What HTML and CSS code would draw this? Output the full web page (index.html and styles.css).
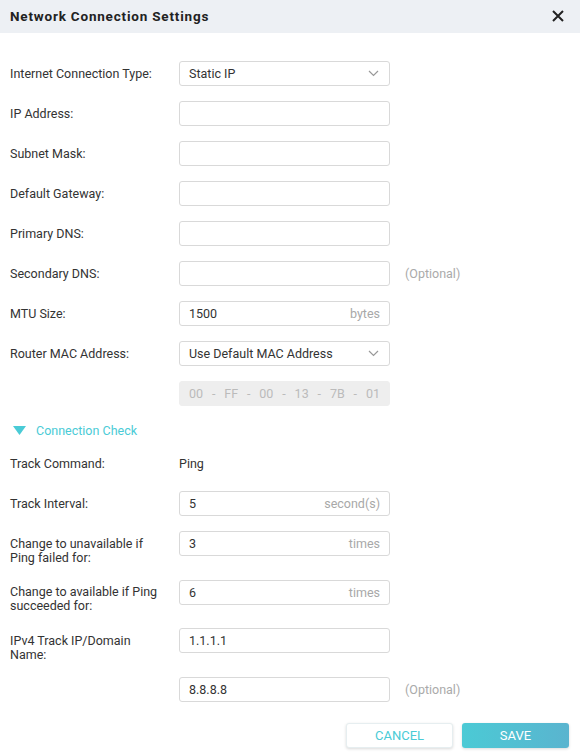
FILE: index.html
```html
<!DOCTYPE html>
<html>
<head>
<meta charset="utf-8">
<link rel="stylesheet" href="styles.css">
</head>
<body>
<div class="dialog">
  <div class="header">
    <span class="title">Network Connection Settings</span>
    <svg class="close" width="14" height="14" viewBox="0 0 14 14"><path d="M2 2 L12 12 M12 2 L2 12" stroke="#222" stroke-width="2" fill="none"/></svg>
  </div>
  <div class="body">
    <div class="row">
      <div class="label">Internet Connection Type:</div>
      <div class="field select"><span>Static IP</span><svg class="chev" width="11" height="7" viewBox="0 0 11 7"><path d="M1 1 L5.5 5.5 L10 1" stroke="#999" stroke-width="1.2" fill="none"/></svg></div>
    </div>
    <div class="row">
      <div class="label">IP Address:</div>
      <div class="field"></div>
    </div>
    <div class="row">
      <div class="label">Subnet Mask:</div>
      <div class="field"></div>
    </div>
    <div class="row">
      <div class="label">Default Gateway:</div>
      <div class="field"></div>
    </div>
    <div class="row">
      <div class="label">Primary DNS:</div>
      <div class="field"></div>
    </div>
    <div class="row">
      <div class="label">Secondary DNS:</div>
      <div class="field"></div>
      <div class="hint">(Optional)</div>
    </div>
    <div class="row">
      <div class="label">MTU Size:</div>
      <div class="field"><span>1500</span><span class="unit">bytes</span></div>
    </div>
    <div class="row">
      <div class="label">Router MAC Address:</div>
      <div class="field select"><span>Use Default MAC Address</span><svg class="chev" width="11" height="7" viewBox="0 0 11 7"><path d="M1 1 L5.5 5.5 L10 1" stroke="#999" stroke-width="1.2" fill="none"/></svg></div>
    </div>
    <div class="row">
      <div class="label"></div>
      <div class="field mac"><span>00</span><span>-</span><span>FF</span><span>-</span><span>00</span><span>-</span><span>13</span><span>-</span><span>7B</span><span>-</span><span>01</span></div>
    </div>
    <div class="section">
      <svg width="13" height="9" viewBox="0 0 13 9"><path d="M0 0 L13 0 L6.5 9 Z" fill="#4acbd6"/></svg>
      <span>Connection Check</span>
    </div>
    <div class="row">
      <div class="label">Track Command:</div>
      <div class="value">Ping</div>
    </div>
    <div class="row">
      <div class="label">Track Interval:</div>
      <div class="field"><span>5</span><span class="unit">second(s)</span></div>
    </div>
    <div class="row">
      <div class="label">Change to unavailable if Ping failed for:</div>
      <div class="field"><span>3</span><span class="unit">times</span></div>
    </div>
    <div class="row">
      <div class="label">Change to available if Ping succeeded for:</div>
      <div class="field"><span>6</span><span class="unit">times</span></div>
    </div>
    <div class="row">
      <div class="label">IPv4 Track IP/Domain Name:</div>
      <div class="field"><span>1.1.1.1</span></div>
    </div>
    <div class="row">
      <div class="label"></div>
      <div class="field"><span>8.8.8.8</span></div>
      <div class="hint">(Optional)</div>
    </div>
  </div>
  <div class="footer">
    <button class="btn cancel">CANCEL</button>
    <button class="btn save">SAVE</button>
  </div>
</div>
</body>
</html>
```
FILE: styles.css
```css
* { box-sizing: border-box; }
html, body { margin: 0; padding: 0; background: #fff; }
body {
  font-family: Roboto, "Liberation Sans", Arial, sans-serif;
  font-size: 12.5px;
  color: #333;
  width: 580px;
  height: 754px;
  overflow: hidden;
}
.dialog { width: 580px; }
.header {
  height: 33px;
  background: #edf0f4;
  display: flex;
  align-items: center;
  justify-content: space-between;
  padding: 0 15px 1px 10px;
}
.title { font-size: 13.5px; font-weight: bold; letter-spacing: 0.8px; color: #222; }
.close { display: block; }
.body { padding: 28px 10px 0 10px; }
.row {
  display: flex;
  align-items: flex-start;
  margin-bottom: 15px;
}
.label {
  width: 169px;
  flex: none;
  padding: 5.5px 20px 0 0;
  line-height: 14px;
  color: #333;
}
.field {
  width: 211px;
  height: 25px;
  border: 1px solid #d9d9d9;
  border-radius: 3px;
  display: flex;
  align-items: center;
  justify-content: space-between;
  padding: 0 9px 0 9px;
  color: #333;
  flex: none;
}
.unit { color: #a8a8a8; }
.chev { display: block; margin-right: 1px; }
.mac {
  background: #eeeeee;
  border-color: #eeeeee;
  color: #bbb;
  padding: 0 9px;
}
.hint { color: #aaa; margin-left: 15px; line-height: 25px; }
.value { line-height: 25px; }
.section {
  display: flex;
  align-items: center;
  height: 18px;
  margin: 0 0 12px 3px;
  color: #4acbd6;
}
.section svg { margin-right: 10px; }
.footer {
  display: flex;
  justify-content: flex-end;
  gap: 9px;
  padding: 6px 11px 0 0;
}
.btn {
  width: 107px;
  height: 25px;
  border-radius: 3px;
  font-family: Roboto, "Liberation Sans", Arial, sans-serif;
  font-size: 13px;
  cursor: pointer;
}
.cancel {
  background: #fff;
  color: #4acbd6;
  border: 1px solid #e6eef0;
  box-shadow: 0 1px 3px rgba(0,0,0,0.15);
}
.save {
  background: linear-gradient(90deg, #4bcad5, #5ab4cf);
  color: #fff;
  border: none;
  box-shadow: 0 1px 3px rgba(0,0,0,0.15);
}
```
